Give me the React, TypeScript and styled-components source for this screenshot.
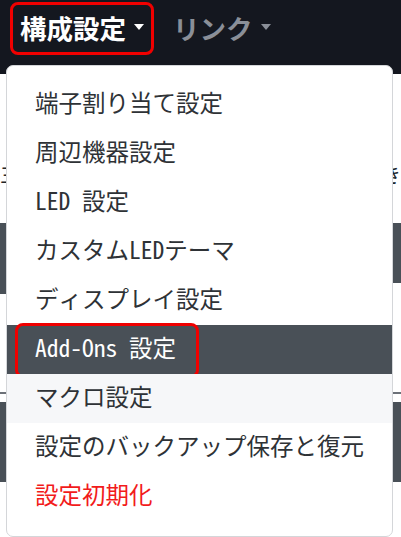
import React from 'react'
import styled, { createGlobalStyle } from 'styled-components'

const GlobalStyle = createGlobalStyle`
  html, body {
    margin: 0;
    padding: 0;
    background: #fff;
    overflow: hidden;
  }
  body {
    font-family: "Noto Sans CJK JP", "Noto Sans", sans-serif;
  }
`

const Page = styled.div`
  position: relative;
  width: 401px;
  height: 537px;
  overflow: hidden;
`

const NavBar = styled.nav`
  display: flex;
  align-items: center;
  gap: 9px;
  height: 74px;
  padding: 0 0 17px 10px;
  box-sizing: border-box;
  background: #14171f;
`

const NavItem = styled.div<{ $active?: boolean }>`
  display: flex;
  align-items: center;
  height: 53px;
  padding: 0 7px 3px;
  box-sizing: border-box;
  border: 3px solid ${(p) => (p.$active ? '#f00000' : 'transparent')};
  border-radius: 8px;
  font-family: "Noto Sans CJK JP", sans-serif;
  font-size: 26.5px;
  font-weight: 700;
  color: ${(p) => (p.$active ? '#ffffff' : '#8a8f98')};
`

const Caret = styled.span`
  display: inline-block;
  margin-left: 8px;
  border-top: 6px solid currentColor;
  border-left: 5px solid transparent;
  border-right: 5px solid transparent;
`

const Content = styled.div`
  display: flex;
  flex-direction: column;
`

const CaptionRow = styled.div`
  display: flex;
  justify-content: space-between;
  margin-top: 88px;
  font-size: 20px;
  line-height: 26px;
  color: #212529;
`

const BarRow = styled.div`
  display: flex;
  justify-content: space-between;
  align-items: flex-start;
  margin-top: 35px;
`

const Bar = styled.div<{ $h: number }>`
  width: 50%;
  height: ${(p) => p.$h}px;
  background: #495057;
`

const Rule = styled.hr`
  margin: 98px 0 0;
  border: 0;
  height: 2px;
  background: #6c7178;
`

const WideBar = styled.div`
  margin-top: 8px;
  height: 80px;
  background: #495057;
`

const Menu = styled.ul`
  position: absolute;
  top: 65px;
  left: 6px;
  width: 387px;
  margin: 0;
  padding: 14px 0 15px;
  list-style: none;
  box-sizing: border-box;
  background: #fff;
  border: 1px solid #d4d6d9;
  border-radius: 7px;
`

const MenuItem = styled.li<{ $active?: boolean; $hover?: boolean; $danger?: boolean }>`
  position: relative;
  display: flex;
  align-items: center;
  height: 49px;
  padding: 0 0 5px 28px;
  box-sizing: border-box;
  font-family: "Noto Sans Mono CJK JP", "Noto Sans CJK JP", monospace;
  font-size: 23.5px;
  white-space: nowrap;
  color: ${(p) => (p.$active ? '#fff' : p.$danger ? '#f21b1b' : '#2e3236')};
  background: ${(p) => (p.$active ? '#495057' : p.$hover ? '#f6f7f9' : 'transparent')};
`

const Marker = styled.span`
  position: absolute;
  top: -2px;
  bottom: -4px;
  left: 8px;
  width: 184px;
  border: 3px solid #f00000;
  border-radius: 8px;
  box-sizing: border-box;
`

const items = [
  { label: '端子割り当て設定' },
  { label: '周辺機器設定' },
  { label: 'LED 設定' },
  { label: 'カスタムLEDテーマ' },
  { label: 'ディスプレイ設定' },
  { label: 'Add-Ons 設定', active: true },
  { label: 'マクロ設定', hover: true },
  { label: '設定のバックアップ保存と復元' },
  { label: '設定初期化', danger: true },
]

const App = (): JSX.Element => {
  return (
    <Page>
      <GlobalStyle />
      <NavBar>
        <NavItem $active>
          構成設定
          <Caret />
        </NavItem>
        <NavItem>
          リンク
          <Caret />
        </NavItem>
      </NavBar>

      <Content>
        <CaptionRow>
          <span>三</span>
          <span>き</span>
        </CaptionRow>
        <BarRow>
          <Bar $h={71} />
          <Bar $h={60} />
        </BarRow>
        <Rule />
        <WideBar />
      </Content>

      <Menu>
        {items.map((item) => (
          <MenuItem key={item.label} $active={item.active} $hover={item.hover} $danger={item.danger}>
            {item.active && <Marker />}
            {item.label}
          </MenuItem>
        ))}
      </Menu>
    </Page>
  )
}

export default App
